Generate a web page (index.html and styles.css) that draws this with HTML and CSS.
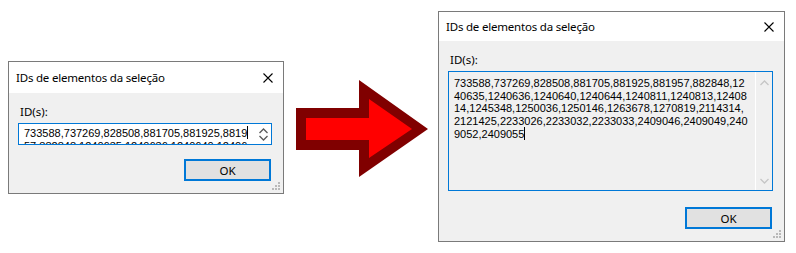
FILE: index.html
```html
<!DOCTYPE html>
<html lang="pt">
<head>
    <meta charset="UTF-8">
    <title>IDs de elementos da seleção</title>
    <link rel="stylesheet" href="styles.css">
</head>
<body>
    <div class="scene">
        <div class="dialog dialog-small">
            <div class="titlebar">
                <span class="title">IDs de elementos da seleção</span>
                <svg class="close" width="10" height="10" viewBox="0 0 10 10"><path d="M0.5 0.5L9.5 9.5M9.5 0.5L0.5 9.5" stroke="#000" stroke-width="1.1" fill="none"/></svg>
            </div>
            <div class="dialog-body">
                <div class="field-label">ID(s):</div>
                <div class="textbox textbox-small">
                    <div class="textbox-text">
                        <div>733588,737269,828508,881705,881925,8819<span class="caret"></span></div>
                        <div>57,882848,1240635,1240636,1240640,12406</div>
                    </div>
                    <div class="scroll scroll-active">
                        <svg width="9" height="6" viewBox="0 0 9 6"><path d="M0.5 5L4.5 1L8.5 5" stroke="currentColor" stroke-width="1.3" fill="none"/></svg>
                        <svg width="9" height="6" viewBox="0 0 9 6"><path d="M0.5 1L4.5 5L8.5 1" stroke="currentColor" stroke-width="1.3" fill="none"/></svg>
                    </div>
                </div>
                <div class="actions">
                    <button class="ok-button">OK</button>
                </div>
            </div>
            <svg class="grip" width="9" height="9" viewBox="0 0 9 9"><path d="M6 0h2v2h-2zM3 3h2v2h-2zM6 3h2v2h-2zM0 6h2v2h-2zM3 6h2v2h-2zM6 6h2v2h-2z" fill="#b9b9b9"/></svg>
        </div>

        <svg class="arrow" width="154" height="133" viewBox="0 0 154 133">
            <polygon points="12,47 75,47 75,19 144,68 75,116 75,89 12,89" fill="#800000"/>
            <polygon points="22,57 85,57 85,38 128,68 85,97 85,79 22,79" fill="#ff0000"/>
        </svg>

        <div class="dialog dialog-large">
            <div class="titlebar">
                <span class="title">IDs de elementos da seleção</span>
                <svg class="close" width="10" height="10" viewBox="0 0 10 10"><path d="M0.5 0.5L9.5 9.5M9.5 0.5L0.5 9.5" stroke="#000" stroke-width="1.1" fill="none"/></svg>
            </div>
            <div class="dialog-body">
                <div class="field-label">ID(s):</div>
                <div class="textbox textbox-large">
                    <div class="textbox-text">
                        <div>733588,737269,828508,881705,881925,881957,882848,12</div>
                        <div>40635,1240636,1240640,1240644,1240811,1240813,12408</div>
                        <div>14,1245348,1250036,1250146,1263678,1270819,2114314,</div>
                        <div>2121425,2233026,2233032,2233033,2409046,2409049,240</div>
                        <div>9052,2409055<span class="caret"></span></div>
                    </div>
                    <div class="scroll scroll-disabled">
                        <svg width="9" height="6" viewBox="0 0 9 6"><path d="M0.5 5L4.5 1L8.5 5" stroke="currentColor" stroke-width="1.3" fill="none"/></svg>
                        <svg width="9" height="6" viewBox="0 0 9 6"><path d="M0.5 1L4.5 5L8.5 1" stroke="currentColor" stroke-width="1.3" fill="none"/></svg>
                    </div>
                </div>
                <div class="actions">
                    <button class="ok-button">OK</button>
                </div>
            </div>
            <svg class="grip" width="9" height="9" viewBox="0 0 9 9"><path d="M6 0h2v2h-2zM3 3h2v2h-2zM6 3h2v2h-2zM0 6h2v2h-2zM3 6h2v2h-2zM6 6h2v2h-2z" fill="#b9b9b9"/></svg>
        </div>
    </div>
</body>
</html>
```

FILE: styles.css
```css
* {
    margin: 0;
    padding: 0;
    box-sizing: border-box;
}

body {
    background: #fff;
    font-family: "Noto Sans", "Liberation Sans", sans-serif;
    color: #000;
}

.scene {
    display: flex;
    align-items: flex-start;
}

.dialog {
    position: relative;
    display: flex;
    flex-direction: column;
    flex: none;
    background: #f0f0f0;
    border: 1px solid #7a7a7a;
}

.dialog-small {
    width: 276px;
    height: 133px;
    margin: 61px 0 0 8px;
}

.dialog-large {
    width: 347px;
    height: 231px;
    margin-top: 11px;
}

.arrow {
    flex: none;
    margin-top: 61px;
}

.titlebar {
    height: 31px;
    background: #fff;
    display: flex;
    align-items: center;
    justify-content: space-between;
    padding: 0 10px 0 7px;
}

.dialog-large .titlebar {
    height: 29px;
}

.title {
    font-size: 11.5px;
    letter-spacing: -0.2px;
}

.dialog-body {
    flex: 1;
    display: flex;
    flex-direction: column;
    padding: 12px 11px 12px 9px;
}

.field-label {
    font-size: 11.5px;
    line-height: 14px;
    height: 14px;
    margin-bottom: 4px;
    padding-left: 2px;
}

.textbox {
    display: flex;
    border: 1px solid #0078d7;
}

.textbox-small {
    height: 22px;
    background: #fff;
}

.textbox-large {
    height: 120px;
    background: #f0f0f0;
}

.textbox-text {
    flex: 1;
    overflow: hidden;
    font-family: "Liberation Sans", Arial, sans-serif;
    font-size: 11px;
    line-height: 12.5px;
    white-space: nowrap;
    padding-left: 5px;
}

.textbox-small .textbox-text {
    padding-top: 2px;
}

.textbox-large .textbox-text {
    padding-top: 5px;
}

.caret {
    display: inline-block;
    width: 1px;
    height: 13px;
    background: #000;
    vertical-align: -2px;
}

.scroll {
    width: 17px;
    display: flex;
    flex-direction: column;
    align-items: center;
    justify-content: space-between;
    border-left: 1px solid #fff;
}

.scroll-active {
    color: #5a5a5a;
    padding: 4px 0 3px;
}

.scroll-disabled {
    color: #c6c6c6;
    padding: 8px 0 6px;
}

.actions {
    margin-top: auto;
    display: flex;
    justify-content: flex-end;
    padding-right: 1px;
}

.ok-button {
    width: 87px;
    height: 22px;
    background: #e1e1e1;
    border: 2px solid #0078d7;
    font-family: "Noto Sans", "Liberation Sans", sans-serif;
    font-size: 11.5px;
    color: #000;
}

.grip {
    position: absolute;
    right: 2px;
    bottom: 2px;
}
```
